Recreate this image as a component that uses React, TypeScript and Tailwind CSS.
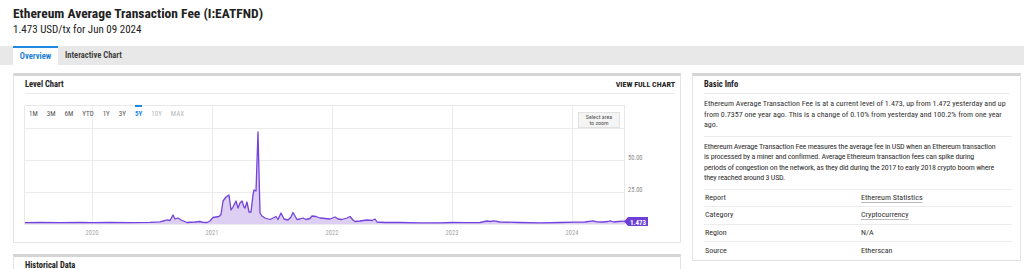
import React from "react";

// chart samples in page pixels (x, y); value 0 sits on y=224
const pts: [number, number][] = [
  [25, 222.6], [40, 222.4], [60, 222.7], [80, 222.5], [92, 222.7], [110, 222.5], [130, 222.6],
  [150, 222.3], [160, 221.8], [165, 220.5], [167, 219.8], [170, 220.5], [173, 215], [175, 219],
  [178, 218], [181, 220], [187, 222.5], [195, 222], [200, 221.5], [203, 222.3], [207, 222.5],
  [210, 221], [213, 217.5], [216, 217], [219, 216.5], [221, 214.5], [223, 201], [226, 197],
  [229, 195], [231, 210], [233, 207], [236, 201], [238, 208], [240, 203], [242, 201], [244, 207],
  [245, 208], [247, 202], [249, 212], [251, 212], [253, 195], [254, 190], [256, 191], [258, 132],
  [260, 213], [262, 216], [265, 218], [270, 219.5], [274, 217.5], [276, 216.5], [278, 219.5],
  [281, 213], [284, 219], [288, 220], [291, 217], [293, 212.5], [297, 219.5], [300, 219],
  [303, 218], [306, 219.5], [310, 218.5], [312, 216], [316, 216.5], [320, 218], [325, 218.5],
  [330, 219], [335, 217], [338, 219], [342, 219.5], [347, 218], [350, 216.5], [353, 220],
  [355, 221.5], [360, 221], [367, 220], [372, 220.5], [375, 219], [377, 222], [385, 222.5],
  [400, 222.5], [420, 222.8], [440, 222.8], [452, 222.5], [465, 222.7], [480, 222.5], [487, 221],
  [490, 221.5], [494, 220.8], [500, 222], [520, 222.5], [540, 222.8], [560, 222.5], [575, 222.2],
  [585, 222], [593, 220.8], [597, 221.8], [603, 222], [608, 221.5], [610, 220.8], [614, 222],
  [618, 221.5], [625, 221.2],
];

const ranges = ["1M", "3M", "6M", "YTD", "1Y", "3Y", "5Y", "10Y", "MAX"];

const Card: React.FC<{ title: string; right?: string; children?: React.ReactNode; className?: string }> = ({
  title,
  right,
  children,
  className,
}) => (
  <section className={`border border-[#e3e3e3] border-t-[3px] border-t-[#d5d5d5] bg-white ${className ?? ""}`}>
    <div
      className={`ml-[11px] ${right ? "mr-[5px]" : "mr-[11px]"} h-[18px] border-b border-[#e8e8e8] flex items-center justify-between text-[8.5px] font-bold text-[#222]`}
    >
      <span>{title}</span>
      {right && <span className="text-[8px]">{right}</span>}
    </div>
    {children}
  </section>
);

const LevelChart: React.FC = () => {
  const line = pts.map(([x, y], i) => `${i ? "L" : "M"}${x - 24},${y - 105}`).join(" ");
  const area = `${line} L601,119 L1,119 Z`;
  return (
    <div className="relative w-[646px] h-[134px]">
      <svg width="646" height="134" className="block" style={{ fontFamily: "Roboto, sans-serif" }}>
        <g stroke="#ececec" strokeWidth="1" shapeRendering="crispEdges">
          <path d="M0.5,0.5 H600.5 V119 M0.5,0.5 V119" fill="none" stroke="#e8e8e8" />
          <line x1="0" y1="23.5" x2="600" y2="23.5" />
          <line x1="0" y1="55.5" x2="600" y2="55.5" />
          <line x1="0" y1="87.5" x2="600" y2="87.5" />
          <line x1="0" y1="119.5" x2="600" y2="119.5" />
          {[68, 188, 308, 428, 548].map((x) => (
            <line key={x} x1={x + 0.5} y1="0" x2={x + 0.5} y2="119" />
          ))}
        </g>
        <path d={area} fill="#dccff3" />
        <path d={line} fill="none" stroke="#7443dc" strokeWidth="1.3" strokeLinejoin="round" />
        <g fontSize="6.5" fill="#8a8a8a" style={{ fontStretch: "condensed" }}>
          <text x="604" y="54.5">50.00</text>
          <text x="604" y="86.5">25.00</text>
        </g>
        <g fontSize="6.5" fill="#a5a5a5" style={{ fontStretch: "condensed" }}>
          {[
            [68, "2020"],
            [188, "2021"],
            [308, "2022"],
            [428, "2023"],
            [548, "2024"],
          ].map(([x, t]) => (
            <text key={t} x={x as number} y="129.5" textAnchor="middle">
              {t}
            </text>
          ))}
        </g>
        <path d="M600,116.5 L604,112 H624 V121 H604 Z" fill="#6d3fd6" />
        <text x="614" y="119.6" fontSize="7" fontWeight="700" fill="#fff" textAnchor="middle" style={{ fontStretch: "condensed" }}>
          1.473
        </text>
      </svg>

      <div className="absolute left-[5px] top-[3px] flex gap-[9px] text-[7px] text-[#555]">
        {ranges.map((r) => (
          <span
            key={r}
            className={`relative h-[12px] flex items-center ${
              r === "5Y" ? "text-[#1e88e5] font-bold" : r === "10Y" || r === "MAX" ? "text-[#b8b8b8]" : ""
            }`}
          >
            {r === "5Y" && <span className="absolute -top-[3px] left-0 right-0 h-[2px] bg-[#1e88e5]" />}
            {r}
          </span>
        ))}
      </div>

      <div className="absolute left-[554px] top-[7px] w-[42px] h-[16px] bg-[#f4f4f4] border border-[#e2e2e2] flex flex-col items-center justify-center text-[6px] leading-[6.5px] text-[#555]">
        <span>Select area</span>
        <span>to zoom</span>
      </div>
    </div>
  );
};

export default function App() {
  return (
    <div className="w-[1024px] h-[269px] overflow-hidden bg-white text-[#333] font-['Roboto',sans-serif] [font-stretch:condensed]">
      <div className="px-[13px] pt-[5px] h-[46px]">
        <h1 className="text-[13.5px] leading-[17px] font-bold text-[#222]">Ethereum Average Transaction Fee (I:EATFND)</h1>
        <p className="text-[11px] leading-[13px] mt-[1px] text-[#222]">1.473 USD/tx for Jun 09 2024</p>
      </div>

      <div className="h-[19px] bg-[#e8e8e8] flex px-[13px]">
        <div className="h-[19px] w-[45px] bg-white border-t-2 border-[#1e88e5] text-[#1e7fd9] font-bold text-[8.5px] flex items-center justify-center">
          Overview
        </div>
        <div className="h-[19px] pl-[7px] text-[#444] font-bold text-[8.5px] flex items-center">Interactive Chart</div>
      </div>

      <div className="flex gap-[11px] px-[13px] pt-[8px]">
        <div className="w-[668px] flex flex-col gap-[11px] shrink-0">
          <Card title="Level Chart" right="VIEW FULL CHART">
            <div className="px-[10px] pt-[11px] pb-[3px]">
              <LevelChart />
            </div>
          </Card>
          <Card title="Historical Data" className="h-[40px]" />
        </div>

        <div className="w-[329px] shrink-0">
          <Card title="Basic Info">
            <div className="pl-[11px] pr-[8px] text-[8px] leading-[10.5px] text-[#333]">
              <p className="py-[5px] pr-[2px] border-b border-[#ececec]">
                Ethereum Average Transaction Fee is at a current level of 1.473, up from 1.472 yesterday and up from 0.7357 one year ago. This is a change of 0.10% from yesterday and 100.2% from one year ago.
              </p>
              <p className="py-[5px] border-b border-[#ececec] whitespace-nowrap tracking-[-0.22px]">
                Ethereum Average Transaction Fee measures the average fee in USD when an Ethereum transaction
                <br />
                is processed by a miner and confirmed. Average Ethereum transaction fees can spike during
                <br />
                periods of congestion on the network, as they did during the 2017 to early 2018 crypto boom where
                <br />
                they reached around 3 USD.
              </p>
              {[
                ["Report", "Ethereum Statistics", true],
                ["Category", "Cryptocurrency", true],
                ["Region", "N/A", false],
                ["Source", "Etherscan", false],
              ].map(([k, v, link], i) => (
                <div key={k as string} className={`grid grid-cols-2 h-[17.5px] items-center ${i < 3 ? "border-b border-[#ececec]" : ""}`}>
                  <span className="pl-[1px]">{k}</span>
                  <span className={`pl-[3px] ${link ? "underline decoration-[#bbb] underline-offset-2" : ""}`}>{v}</span>
                </div>
              ))}
            </div>
          </Card>
        </div>
      </div>
    </div>
  );
}
